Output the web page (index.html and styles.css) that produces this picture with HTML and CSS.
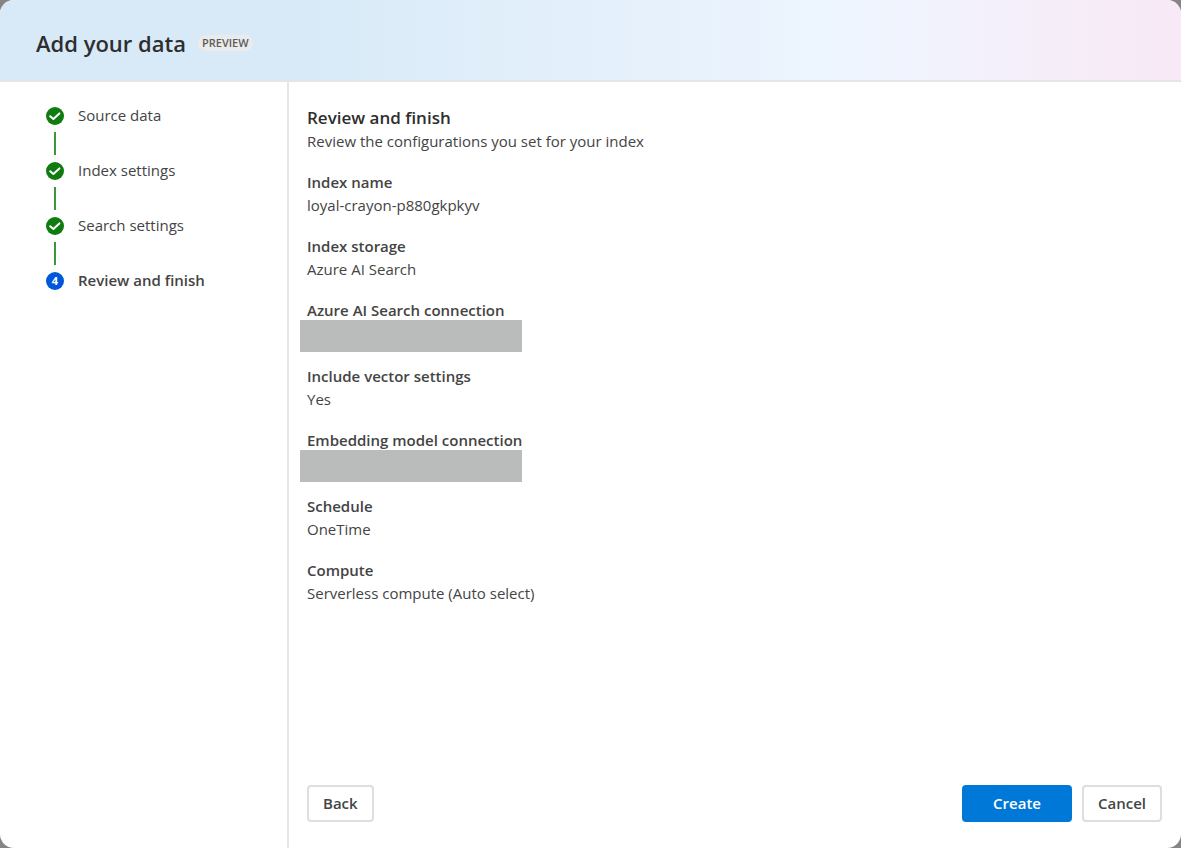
FILE: index.html
```
<!DOCTYPE html>
<html lang="en">
<head>
  <meta charset="UTF-8" />
  <meta name="viewport" content="width=device-width, initial-scale=1.0"/>
  <title>Add your data</title>
  <link rel="stylesheet" href="styles.css">
</head>
<body>
  <div class="backdrop">
    <div class="dialog" role="dialog" aria-labelledby="dialogTitle">
      <header class="dialog-header">
        <h1 id="dialogTitle">Add your data</h1>
        <span class="badge">PREVIEW</span>
      </header>

      <div class="dialog-body">
        <!-- Wizard steps -->
        <ol class="steps">
          <li class="step done">
            <svg class="step-icon" viewBox="0 0 18 18" aria-hidden="true"><circle cx="9" cy="9" r="9"/><path d="M4.2 9.2l3.2 2.8 6-5.6"/></svg>
            <span>Source data</span>
          </li>
          <li class="step done">
            <svg class="step-icon" viewBox="0 0 18 18" aria-hidden="true"><circle cx="9" cy="9" r="9"/><path d="M4.2 9.2l3.2 2.8 6-5.6"/></svg>
            <span>Index settings</span>
          </li>
          <li class="step done">
            <svg class="step-icon" viewBox="0 0 18 18" aria-hidden="true"><circle cx="9" cy="9" r="9"/><path d="M4.2 9.2l3.2 2.8 6-5.6"/></svg>
            <span>Search settings</span>
          </li>
          <li class="step current" aria-current="step">
            <span class="step-number">4</span>
            <span>Review and finish</span>
          </li>
        </ol>

        <main class="content">
          <h2>Review and finish</h2>
          <p>Review the configurations you set for your index</p>

          <dl class="summary">
            <div>
              <dt>Index name</dt>
              <dd>loyal-crayon-p880gkpkyv</dd>
            </div>
            <div>
              <dt>Index storage</dt>
              <dd>Azure AI Search</dd>
            </div>
            <div>
              <dt>Azure AI Search connection</dt>
              <dd class="redacted"></dd>
            </div>
            <div>
              <dt>Include vector settings</dt>
              <dd>Yes</dd>
            </div>
            <div>
              <dt>Embedding model connection</dt>
              <dd class="redacted"></dd>
            </div>
            <div>
              <dt>Schedule</dt>
              <dd>OneTime</dd>
            </div>
            <div>
              <dt>Compute</dt>
              <dd>Serverless compute (Auto select)</dd>
            </div>
          </dl>

          <footer class="actions">
            <button type="button" class="back">Back</button>
            <button type="button" class="primary">Create</button>
            <button type="button">Cancel</button>
          </footer>
        </main>
      </div>
    </div>
  </div>
</body>
</html>
```

FILE: styles.css
```
* { margin: 0; padding: 0; box-sizing: border-box; }
body {
  font-family: "Open Sans", "Noto Sans", sans-serif;
  font-size: 15px;
  line-height: 23px;
  color: #444;
  background: #fff;
  min-height: 100vh;
  padding: 0 4px 4px 0;
  display: flex;
}
.backdrop {
  flex: 1;
  display: flex;
  background: #858585;
}
.dialog {
  flex: 1;
  display: flex;
  flex-direction: column;
  background: #fff;
  border-radius: 14px;
  overflow: hidden;
}
.dialog-header {
  display: flex;
  align-items: center;
  gap: 12px;
  padding: 23px 36px 17px;
  border-bottom: 2px solid #e3e5e9;
  background: linear-gradient(to right, #d8eaf8 25%, #eef5fe 72%, #f4effa 86%, #f8e9f6);
}
h1 {
  font-size: 22px;
  line-height: 40px;
  font-weight: 600;
  color: #2e2e2e;
}
.badge {
  padding: 0 4px;
  border-radius: 8px;
  background: #ebebeb;
  color: #5c5c5c;
  font-size: 11px;
  line-height: 16px;
  font-weight: 600;
}
.dialog-body {
  flex: 1;
  display: flex;
}

/* Steps */
.steps {
  width: 289px;
  padding: 25px 24px 24px 46px;
  border-right: 2px solid #e6e6e6;
  list-style: none;
}
.step {
  display: grid;
  grid-template-columns: 18px 1fr;
  grid-template-rows: 18px 23px;
  gap: 7px 14px;
  margin-bottom: 7px;
  line-height: 17px;
}
.step.done::after {
  content: "";
  width: 2px;
  margin-left: 8px;
  background: #3c963c;
}
.step.current { font-weight: 600; }
.step-icon {
  width: 18px;
  height: 18px;
}
.step-icon circle { fill: #107c10; }
.step-icon path {
  fill: none;
  stroke: #fff;
  stroke-width: 2;
  stroke-linecap: round;
  stroke-linejoin: round;
}
.step-number {
  border-radius: 50%;
  background: #0058d8;
  color: #fff;
  font-size: 11px;
  line-height: 18px;
  font-weight: 700;
  text-align: center;
}

/* Review */
.content {
  flex: 1;
  display: flex;
  flex-direction: column;
  padding: 24px 19px 26px 18px;
}
h2 {
  font-size: 17px;
  line-height: 24px;
  font-weight: 600;
  color: #2e2e2e;
}
.summary {
  display: grid;
  gap: 18px;
  margin-top: 18px;
}
dt { font-weight: 600; }
.redacted {
  width: 222px;
  height: 32px;
  margin: -2px 0 -5px -7px;
  background: #babcbb;
}
.actions {
  display: flex;
  gap: 10px;
  margin-top: auto;
}
button {
  height: 37px;
  padding: 0 14px;
  border: 2px solid #dedede;
  border-radius: 4px;
  background: #fff;
  color: #444;
  font: inherit;
  font-weight: 600;
  cursor: pointer;
}
.back { margin-right: auto; }
.primary {
  padding: 0 29px;
  border-color: #0078d7;
  background: #0078d7;
  color: #fff;
}
```
